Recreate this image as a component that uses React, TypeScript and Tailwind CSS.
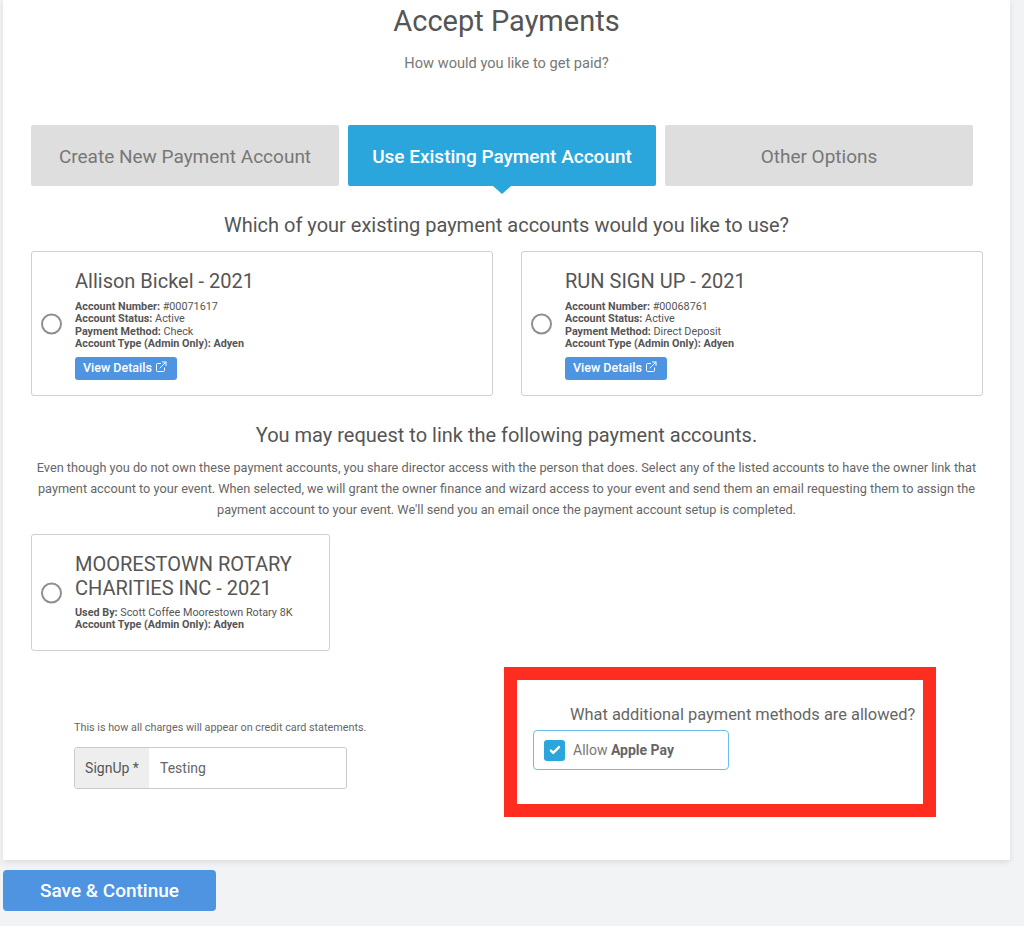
import React from 'react';

function ExternalIcon() {
  return (
    <svg className="h-3 w-3 ml-[3px] -mt-[3px]" viewBox="0 0 24 24" fill="none" stroke="currentColor" strokeWidth={2} strokeLinecap="round" strokeLinejoin="round">
      <path d="M19 14v5a2 2 0 0 1-2 2H5a2 2 0 0 1-2-2V7a2 2 0 0 1 2-2h6" />
      <path d="M15 2h7v7" />
      <path d="M10 14 22 2" />
    </svg>
  );
}

function Radio() {
  return <div className="absolute left-[9px] top-1/2 h-[21px] w-[21px] -translate-y-1/2 rounded-full border-2 border-[#8f8f8f] bg-white"></div>;
}

function Line({ label, value }: { label: string; value: string }) {
  return (
    <div className="text-[10.8px] leading-[12.4px] text-[#555]">
      <span className="font-bold">{label}</span> {value}
    </div>
  );
}

function AccountCard({ name, number, method }: { name: string; number: string; method: string }) {
  return (
    <div className="relative h-[145px] w-[462px] rounded-[3px] border border-[#cfd0d2] bg-white pl-[43px] pt-[17px]">
      <Radio />
      <div className="text-[20px] leading-[24px] text-[#555]">{name}</div>
      <div className="mt-[8px]">
        <Line label="Account Number:" value={number} />
        <Line label="Account Status:" value="Active" />
        <Line label="Payment Method:" value={method} />
        <div className="text-[10.8px] leading-[12.4px] font-bold text-[#555]">Account Type (Admin Only): Adyen</div>
      </div>
      <div className="mt-[6px] flex h-[23px] w-[102px] items-center rounded-[3px] bg-[#4f94e0] pl-[8px] text-[12.5px] font-medium text-white">
        View Details
        <ExternalIcon />
      </div>
    </div>
  );
}

export default function App() {
  return (
    <div className="h-[926px] overflow-hidden bg-[#f2f3f5] pl-[3px] font-['Roboto',sans-serif]">
      <div className="h-[860px] w-[1007px] bg-white pt-[4px] shadow-[0_2px_6px_rgba(0,0,0,0.1)]">
        <h1 className="text-center text-[29px] leading-[34px] text-[#555]">Accept Payments</h1>
        <p className="mt-[16px] text-center text-[14.6px] leading-[18px] text-[#777]">How would you like to get paid?</p>

        <div className="mt-[53px] ml-[28px] flex gap-[9px]">
          <div className="flex h-[61px] w-[308px] items-center justify-center rounded-[2px] bg-[#dedede] pt-[4px] text-[19px] text-[#777]">Create New Payment Account</div>
          <div className="relative flex h-[61px] w-[308px] items-center justify-center rounded-[2px] bg-[#2ba6dc] pt-[4px] text-[19px] font-medium text-white">
            Use Existing Payment Account
            <div className="absolute left-1/2 top-full h-0 w-0 -translate-x-1/2 border-x-[9px] border-t-[8px] border-x-transparent border-t-[#2ba6dc]"></div>
          </div>
          <div className="flex h-[61px] w-[308px] items-center justify-center rounded-[2px] bg-[#dedede] pt-[4px] text-[19px] text-[#777]">Other Options</div>
        </div>

        <h2 className="mt-[27px] text-center text-[20px] leading-[24px] text-[#555]">Which of your existing payment accounts would you like to use?</h2>

        <div className="mt-[14px] ml-[28px] flex gap-[28px]">
          <AccountCard name="Allison Bickel - 2021" number="#00071617" method="Check" />
          <AccountCard name="RUN SIGN UP - 2021" number="#00068761" method="Direct Deposit" />
        </div>

        <h2 className="mt-[27px] text-center text-[20px] leading-[24px] text-[#555]">You may request to link the following payment accounts.</h2>
        <p className="mx-auto mt-[10px] w-[960px] text-center text-[12.72px] leading-[21px] text-[#666]">
          Even though you do not own these payment accounts, you share director access with the person that does. Select any of the listed accounts to have the owner link that payment account to your event. When selected, we will grant the owner finance and wizard access to your event and send them an email requesting them to assign the payment account to your event. We'll send you an email once the payment account setup is completed.
        </p>

        <div className="relative mt-[14px] ml-[28px] h-[117px] w-[299px] rounded-[3px] border border-[#cfd0d2] bg-white pl-[43px] pt-[17px]">
          <Radio />
          <div className="text-[20px] leading-[24px] text-[#555]">MOORESTOWN ROTARY CHARITIES INC - 2021</div>
          <div className="mt-[7px] text-[10.8px] leading-[12.4px] text-[#555]">
            <span className="font-bold">Used By:</span> Scott Coffee Moorestown Rotary 8K
          </div>
          <div className="text-[10.8px] leading-[12.4px] font-bold text-[#555]">Account Type (Admin Only): Adyen</div>
        </div>

        <div className="mt-[16px] flex">
          <div className="ml-[71px] w-[430px] pt-[54px]">
            <div className="text-[10.8px] leading-[14px] text-[#666]">This is how all charges will appear on credit card statements.</div>
            <div className="mt-[12px] flex h-[42px] w-[273px] overflow-hidden rounded-[3px] border border-[#c9c9c9] text-[14px] text-[#666]">
              <div className="flex w-[74px] items-center justify-center bg-[#eeeeee] text-[#555]">SignUp *</div>
              <div className="flex flex-1 items-center pl-[11px]">Testing</div>
            </div>
          </div>
          <div className="h-[150px] w-[432px] border-[13px] border-[#ff2d20] pt-[25px] pl-[16px]">
            <div className="ml-[37px] whitespace-nowrap text-[16.4px] leading-[20px] text-[#666]">What additional payment methods are allowed?</div>
            <div className="mt-[5px] flex h-[40px] w-[196px] items-center rounded-[4px] border border-[#6fbcec] pl-[10px]">
              <div className="flex h-[21px] w-[21px] items-center justify-center rounded-[3px] bg-[#2ba6dc]">
                <svg className="h-[14px] w-[14px] text-white" viewBox="0 0 24 24" fill="none" stroke="currentColor" strokeWidth={4} strokeLinecap="round" strokeLinejoin="round">
                  <path d="M5 13l4 4L19 7" />
                </svg>
              </div>
              <span className="ml-[8px] text-[14px] text-[#777]">Allow <span className="font-bold text-[#666]">Apple Pay</span></span>
            </div>
          </div>
        </div>
      </div>

      <button className="mt-[10px] flex h-[41px] w-[213px] items-center justify-center rounded-[4px] bg-[#4f94e0] pt-[1px] text-[19px] font-medium text-white">Save &amp; Continue</button>
    </div>
  );
}
